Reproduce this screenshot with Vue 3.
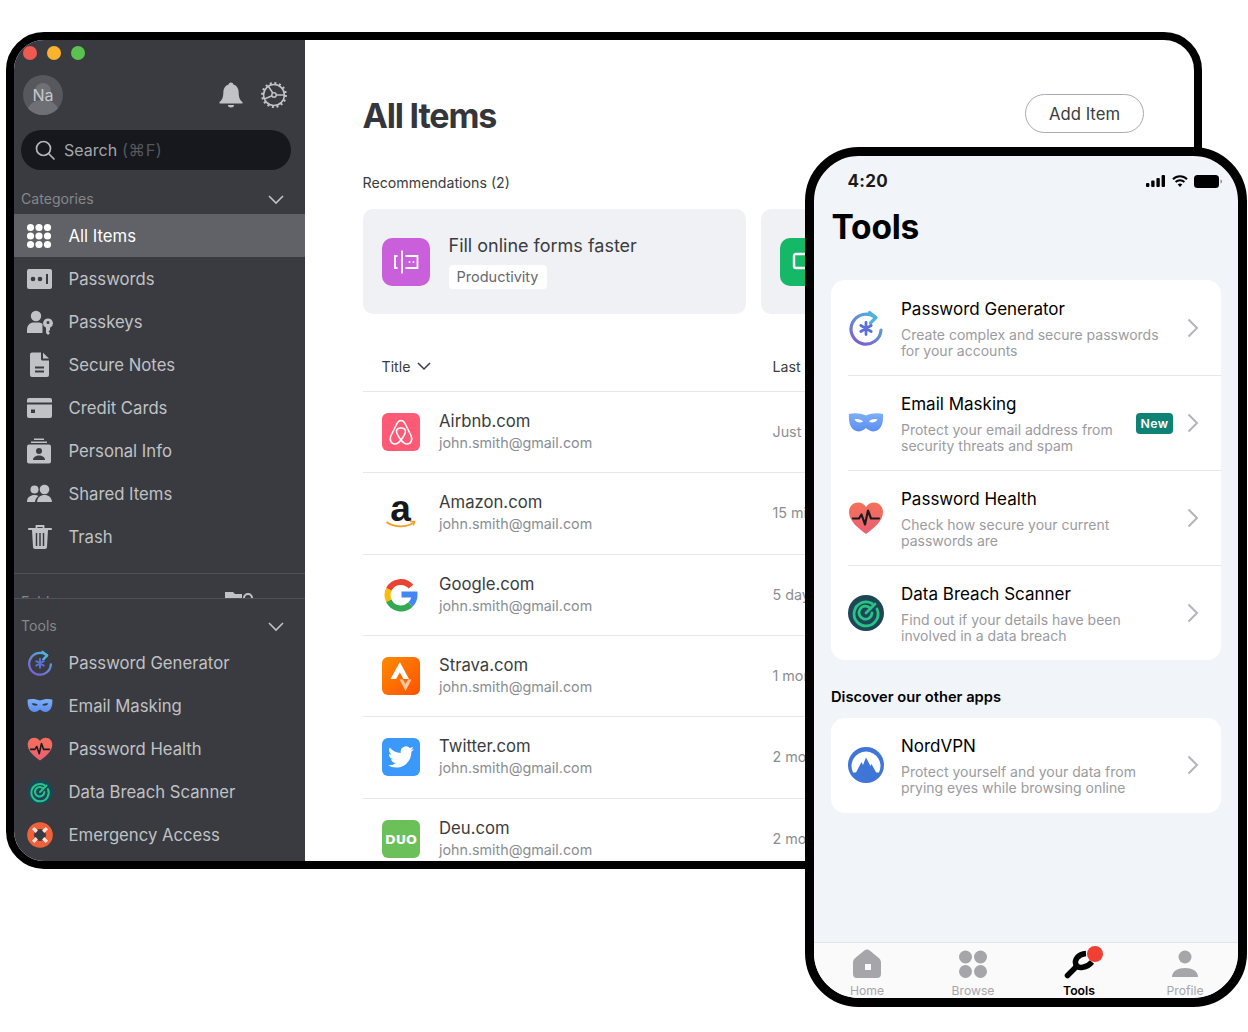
<template>
  <div class="page">
    <svg class="sprites" width="0" height="0" aria-hidden="true">
      <defs>
        <linearGradient id="grad-gen" x1="0.9" y1="0" x2="0.2" y2="1">
          <stop offset="0" stop-color="#4fb3dc" />
          <stop offset="1" stop-color="#7a5fd0" />
        </linearGradient>
        <linearGradient id="grad-mask" x1="0" y1="0" x2="0" y2="1">
          <stop offset="0" stop-color="#7cb0f8" />
          <stop offset="1" stop-color="#5b8df0" />
        </linearGradient>
        <linearGradient id="grad-heart" x1="0" y1="0" x2="0" y2="1">
          <stop offset="0" stop-color="#f5705a" />
          <stop offset="1" stop-color="#ea5f72" />
        </linearGradient>
        <linearGradient id="grad-strava" x1="0" y1="0" x2="1" y2="1">
          <stop offset="0" stop-color="#ff8a00" />
          <stop offset="1" stop-color="#ff5200" />
        </linearGradient>
        <symbol id="ic-gen" viewBox="0 0 36 36">
          <path d="M27.500 7.500A15 15 0 1 0 33 20" fill="none" stroke="url(#grad-gen)" stroke-width="3.200" stroke-linecap="round" />
          <path d="M21.500 2.500l6.500 5-5.500 5.500" fill="none" stroke="#4fb3dc" stroke-width="3.200" stroke-linecap="round" stroke-linejoin="round" />
          <path d="M18 12.500v12M12.800 15.500l10.400 6M23.200 15.500l-10.400 6" stroke="#5a6fd8" stroke-width="2.800" stroke-linecap="round" />
        </symbol>
        <symbol id="ic-mask" viewBox="0 0 36 36">
          <path fill="url(#grad-mask)" fill-rule="evenodd" d="M1 9C7 7.500 13 8.500 18 10.500c5-2 11-3 17-1.500 .5 6-.5 13-5 16-4 2.500-8 1.500-12-2-4 3.500-8 4.500-12 2C1.500 22 .5 15 1 9zM6.500 14.500c1.500 3 6 4 8.500 2-1.500-2-5.500-3.200-8.500-2zM29.500 14.500c-1.500 3-6 4-8.500 2 1.500-2 5.500-3.200 8.500-2z" />
        </symbol>
        <symbol id="ic-heart" viewBox="0 0 36 36">
          <path fill="url(#grad-heart)" d="M18 34C10 28 1 21 1 12C1 6.500 5 2.500 10 2.500c3.500 0 6.500 1.800 8 4.500C19.500 4.300 22.500 2.500 26 2.500c5 0 9 4 9 9.500C35 21 26 28 18 34z" />
          <path d="M5 18.500h6l2.500-4 3.500 10 3-14 3 8h8" fill="none" stroke="#1b1b1f" stroke-width="2.200" stroke-linecap="round" stroke-linejoin="round" />
        </symbol>
        <symbol id="ic-radar" viewBox="0 0 36 36">
          <circle cx="18" cy="18" r="18" fill="#1d4756" />
          <path d="M24 8.500A12 12 0 1 0 29 14" fill="none" stroke="#27c486" stroke-width="2.800" stroke-linecap="round" />
          <path d="M22.500 13.500A6.500 6.500 0 1 0 24 18" fill="none" stroke="#27c486" stroke-width="2.800" stroke-linecap="round" />
          <path d="M18 18L27 9" stroke="#27c486" stroke-width="2.800" stroke-linecap="round" />
        </symbol>
        <symbol id="ic-life" viewBox="0 0 36 36">
          <circle cx="18" cy="18" r="13" fill="none" stroke="#f0603a" stroke-width="9.500" />
          <path d="M8.500 8.500l5 5M27.500 8.500l-5 5M8.500 27.500l5-5M27.500 27.500l-5-5" stroke="#fbe3da" stroke-width="4.500" />
        </symbol>
        <symbol id="ic-nord" viewBox="0 0 36 36">
          <circle cx="18" cy="18" r="18" fill="#3e75d6" />
          <path d="M5 25.500A14.500 14.500 0 1 1 31 25.500z" fill="#fff" />
          <path d="M7 27.500L13.500 15l1.500 3 3-7.500 4.500 8.500 1-2 6 11-6 5H12z" fill="#3e75d6" />
        </symbol>
      </defs>
    </svg>

    <div class="tablet">
      <aside class="sidebar">
        <div class="lights">
          <span class="light red"></span>
          <span class="light yellow"></span>
          <span class="light green"></span>
        </div>
        <div class="profile">
          <div class="avatar">
            <svg viewBox="0 0 40 40" width="40" height="40">
              <circle cx="20" cy="16" r="8" fill="#6e7075" />
              <path d="M4 36c2-8 9-11 16-11s14 3 16 11l-8 4H12z" fill="#6e7075" />
            </svg>
            <span>Na</span>
          </div>
          <svg class="bell" viewBox="0 0 26 26" width="26" height="26">
            <path fill="#c0c2c6" d="M13 0.500c1.300 0 2.200 .8 2.400 2 3.500 1 5.300 4 5.300 8 0 5 1.300 7.500 3.800 9.500v1.500H1.500V20c2.500-2 3.800-4.500 3.800-9.500 0-4 1.800-7 5.300-8 .2-1.200 1.100-2 2.400-2z" />
            <path fill="#c0c2c6" d="M10 23h6a3 2.500 0 0 1-6 0z" />
          </svg>
          <svg class="gear" viewBox="0 0 26 26" width="26" height="26" fill="none" stroke="#c0c2c6">
            <circle cx="13" cy="13" r="11.700" stroke-width="2.400" stroke-dasharray="2 2.600" />
            <circle cx="13" cy="13" r="10.400" stroke-width="1.500" />
            <circle cx="13" cy="13" r="2.200" stroke-width="1.500" />
            <path d="M11.800 11L7.500 4.500M11 13.800l-7 3M15.200 13H23" stroke-width="1.500" />
          </svg>
        </div>
        <div class="search">
          <svg viewBox="0 0 20 20" width="20" height="20" fill="none" stroke="#b4b6ba" stroke-width="1.700">
            <circle cx="8.500" cy="8.500" r="7" />
            <path d="M13.500 13.500L19 19" stroke-linecap="round" />
          </svg>
          <span class="search-text">Search</span>
          <span class="search-hint">(⌘F)</span>
        </div>

        <div class="section-label">
          <span>Categories</span>
          <svg class="chev" viewBox="0 0 16 10" width="16" height="10"><path d="M1 1l7 7 7-7" /></svg>
        </div>
        <div v-for="c in categories" :key="c.label" class="side-row" :class="{ active: c.active }">
          <svg class="side-icon" viewBox="0 0 26 26" width="26" height="26">
            <g v-if="c.icon === 'grid'" fill="#fff">
              <template v-for="y in [4.500, 13, 21.500]" :key="y">
                <circle v-for="x in [3.500, 12, 20.500]" :key="x" :cx="x" :cy="y" r="3.600" />
              </template>
            </g>
            <g v-else-if="c.icon === 'passwords'">
              <rect y="3" width="25" height="20" rx="2" fill="#c0c2c6" />
              <circle cx="6" cy="13" r="2.300" fill="#393b40" />
              <circle cx="13" cy="13" r="2.300" fill="#393b40" />
              <rect x="19" y="8" width="2" height="10" fill="#393b40" />
            </g>
            <g v-else-if="c.icon === 'passkeys'" fill="#c0c2c6">
              <circle cx="9" cy="7" r="5.200" />
              <path d="M0 24v-3c0-5 3-7.500 7-7.500h4c2 0 3.500 .5 4.500 1.500v9z" />
              <path fill-rule="evenodd" d="M21 9.500a4.800 4.800 0 0 1 2 9.200V21l-1.500 1.500L23 24l-2 2-2-2v-5.300a4.800 4.800 0 0 1 2-9.200zM21 12a1.500 1.500 0 1 0 0 3 1.500 1.500 0 0 0 0-3z" />
            </g>
            <g v-else-if="c.icon === 'notes'" fill="#c0c2c6">
              <path d="M5 0.500h9v6.500a1.500 1.500 0 0 0 1.500 1.500H22V23a2 2 0 0 1-2 2H5a2 2 0 0 1-2-2V2.500a2 2 0 0 1 2-2z" />
              <path d="M16 0.800L22 6.500h-6z" />
              <path d="M8 15.500h9M8 19.500h9" stroke="#393b40" stroke-width="1.800" />
            </g>
            <g v-else-if="c.icon === 'cards'" fill="#c0c2c6">
              <path d="M2 3h21a2 2 0 0 1 2 2v2.500H0V5a2 2 0 0 1 2-2z" />
              <path d="M0 9.500h25V21a2 2 0 0 1-2 2H2a2 2 0 0 1-2-2z" />
              <rect x="4" y="14.500" width="4" height="3.500" fill="#393b40" />
            </g>
            <g v-else-if="c.icon === 'personal'" fill="#c0c2c6">
              <rect x="7" y="0.500" width="10" height="1.500" />
              <rect x="4" y="3.500" width="16" height="1.500" />
              <rect y="6.500" width="24" height="19" rx="2" />
              <circle cx="12" cy="13" r="3" fill="#393b40" />
              <path d="M6 22c0-3 3-4.500 6-4.500s6 1.500 6 4.500z" fill="#393b40" />
            </g>
            <g v-else-if="c.icon === 'shared'" fill="#c0c2c6">
              <circle cx="7.500" cy="8.500" r="4" />
              <circle cx="17.500" cy="8.500" r="4.800" />
              <path d="M0 21c0-5 3.500-7 7.500-7 1.500 0 2.800 .3 4 1-2.200 1.500-3.300 3.500-3.500 6z" />
              <path d="M10 21c.3-4.500 3.500-7 7.500-7s7.200 2.500 7.500 7z" />
            </g>
            <g v-else fill="none" stroke="#c0c2c6">
              <path d="M2 5h22" stroke-width="2.200" stroke-linecap="round" />
              <path d="M9.500 4.500V2h7v2.500" stroke-width="1.800" />
              <path d="M5 6l1 17a2 2 0 0 0 2 2h10a2 2 0 0 0 2-2l1-17z" fill="#c0c2c6" stroke="none" />
              <path d="M9.500 9v13M13 9v13M16.500 9v13" stroke="#393b40" stroke-width="1.500" />
            </g>
          </svg>
          <span>{{ c.label }}</span>
        </div>

        <div class="folders">
          <span class="folders-label">Folders</span>
          <svg viewBox="0 0 28 14" width="28" height="14">
            <path d="M0 0h8l2 2h7v12H0z" fill="#c0c2c6" />
            <circle cx="23" cy="6" r="4" fill="none" stroke="#c0c2c6" stroke-width="2" />
          </svg>
        </div>

        <div class="section-label tools-label">
          <span>Tools</span>
          <svg class="chev" viewBox="0 0 16 10" width="16" height="10"><path d="M1 1l7 7 7-7" /></svg>
        </div>
        <div v-for="t in sideTools" :key="t.label" class="side-row">
          <svg class="side-icon" width="26" height="26"><use :href="'#ic-' + t.icon" /></svg>
          <span>{{ t.label }}</span>
        </div>
      </aside>

      <main class="main">
        <div class="main-head">
          <h1>All Items</h1>
          <button class="add-btn">Add Item</button>
        </div>
        <p class="rec-title">Recommendations (2)</p>
        <div class="recs">
          <div class="rec-card">
            <div class="rec-icon purple">
              <svg viewBox="0 0 28 28" width="28" height="28" fill="none" stroke="#fff" stroke-width="1.800">
                <path d="M5.500 8H3v12h2.500M10 2.500v23" />
                <path d="M13.500 8h12v12h-12" />
                <circle cx="17.500" cy="14" r="1" fill="#fff" stroke="none" />
                <circle cx="21.500" cy="14" r="1" fill="#fff" stroke="none" />
              </svg>
            </div>
            <div class="rec-body">
              <div class="rec-name">Fill online forms faster</div>
              <span class="rec-tag">Productivity</span>
            </div>
          </div>
          <div class="rec-card">
            <div class="rec-icon green">
              <svg viewBox="0 0 28 28" width="28" height="28" fill="none" stroke="#fff" stroke-width="2.400">
                <path d="M24 6H6a2 2 0 0 0-2 2v10a2 2 0 0 0 2 2h18" />
              </svg>
            </div>
            <div class="rec-body">
              <div class="rec-name">Set up two-factor login</div>
              <span class="rec-tag">Security</span>
            </div>
          </div>
        </div>

        <div class="table-head">
          <div class="th-title">
            Title
            <svg viewBox="0 0 14 9" width="14" height="9" fill="none" stroke="#3a3c40" stroke-width="1.500"><path d="M1 1l6 6 6-6" /></svg>
          </div>
          <div>Last used</div>
        </div>
        <div v-for="s in sites" :key="s.name" class="site-row">
          <div class="site-cell">
            <svg class="site-logo" viewBox="0 0 38 38" width="38" height="38">
              <g v-if="s.logo === 'airbnb'">
                <rect width="38" height="38" rx="6" fill="#ff5a75" />
                <path fill="none" stroke="#fff" stroke-width="1.600" d="M19 7.500c-2 0-3 1-4 3l-6 12c-2 4 0 8.500 4 8.500 2 0 4-1.500 6-4 2 2.500 4 4 6 4 4 0 6-4.500 4-8.500l-6-12c-1-2-2-3-4-3zM19 27c-3-4-4.500-6.500-4.500-8.500 0-2.500 2-3.500 4.500-3.500s4.500 1 4.500 3.500c0 2-1.500 4.500-4.500 8.500z" />
              </g>
              <g v-else-if="s.logo === 'amazon'">
                <text x="18.500" y="26.500" text-anchor="middle" class="amazon-a">a</text>
                <path d="M5 28.500c8 5 19 5 26 .5" fill="none" stroke="#f79c1d" stroke-width="1.800" stroke-linecap="round" />
                <path d="M28 27.500h4.500l-1 4" fill="none" stroke="#f79c1d" stroke-width="1.400" />
              </g>
              <g v-else-if="s.logo === 'google'" fill="none" stroke-width="6">
                <path d="M28.960 10.640A13.500 13.500 0 0 0 6.800 13.300" stroke="#ea4335" />
                <path d="M6.800 13.300A13.500 13.500 0 0 0 6.800 24.700" stroke="#fbbc05" />
                <path d="M6.800 24.700A13.500 13.500 0 0 0 28.500 28.500" stroke="#34a853" />
                <path d="M28.500 28.500A13.500 13.500 0 0 0 32.500 18.500H19.500" stroke="#4285f4" />
              </g>
              <g v-else-if="s.logo === 'strava'">
                <rect width="38" height="38" rx="6" fill="url(#grad-strava)" />
                <path d="M17.800 5L27 22h-5.500l-3.700-6.500-3.700 6.500H8.500z" fill="#fff" />
                <path d="M17.500 22.500h3.500l2.500 4.500 2.500-4.500h3.500L23.500 34z" fill="#ffc4a0" />
              </g>
              <g v-else-if="s.logo === 'twitter'">
                <rect width="38" height="38" rx="6" fill="#3b99fc" />
                <svg x="6" y="6" width="26" height="26" viewBox="0 0 24 24">
                  <path fill="#fff" d="M23.953 4.570a10 10 0 01-2.825.775 4.958 4.958 0 002.163-2.723c-.951.555-2.005.959-3.127 1.184a4.920 4.920 0 00-8.384 4.482C7.690 8.095 4.067 6.130 1.640 3.162a4.822 4.822 0 00-.666 2.475c0 1.710.870 3.213 2.188 4.096a4.904 4.904 0 01-2.228-.616v.060a4.923 4.923 0 003.946 4.827 4.996 4.996 0 01-2.212.085 4.936 4.936 0 004.604 3.417 9.867 9.867 0 01-6.102 2.105c-.390 0-.779-.023-1.170-.067a13.995 13.995 0 007.557 2.209c9.053 0 13.998-7.496 13.998-13.985 0-.210 0-.420-.015-.630A9.935 9.935 0 0024 4.590z" />
                </svg>
              </g>
              <g v-else>
                <rect width="38" height="38" rx="6" fill="#6cc05a" />
                <text x="19" y="23.700" text-anchor="middle" class="duo-text" textLength="32" lengthAdjust="spacingAndGlyphs">DUO</text>
              </g>
            </svg>
            <div>
              <div class="site-name">{{ s.name }}</div>
              <div class="site-mail">john.smith@gmail.com</div>
            </div>
          </div>
          <div class="site-when">{{ s.when }}</div>
        </div>
      </main>
    </div>

    <div class="phone">
      <div class="status">
        <span class="clock">4:20</span>
        <div class="status-icons">
          <svg viewBox="0 0 20 12" width="20" height="12" fill="#000">
            <rect y="8" width="3.400" height="4" rx="1" />
            <rect x="5.200" y="5.500" width="3.400" height="6.500" rx="1" />
            <rect x="10.400" y="3" width="3.400" height="9" rx="1" />
            <rect x="15.600" y="0" width="3.400" height="12" rx="1" />
          </svg>
          <svg viewBox="0 0 16 12" width="16" height="12" fill="none" stroke="#000" stroke-width="2">
            <path d="M1 4.200a10 10 0 0 1 14 0M3.600 7a6.300 6.300 0 0 1 8.800 0" />
            <path d="M8 12l-2.300-2.500a3.300 3.300 0 0 1 4.600 0z" fill="#000" stroke="none" />
          </svg>
          <svg viewBox="0 0 28 13" width="28" height="13">
            <rect x="0" y="0" width="25" height="13" rx="3.500" fill="#000" />
            <path d="M26.500 4.500c1 .3 1.500 1 1.500 2s-.5 1.700-1.500 2z" fill="#8a8a8e" />
          </svg>
        </div>
      </div>
      <h2 class="phone-title">Tools</h2>
      <div class="phone-card tools-card">
        <div v-for="t in phoneTools" :key="t.title" class="tool-row">
          <svg class="tool-icon" width="36" height="36"><use :href="'#ic-' + t.icon" /></svg>
          <div class="tool-text">
            <div class="tool-title">{{ t.title }}</div>
            <div class="tool-desc">{{ t.desc }}</div>
          </div>
          <span v-if="t.isNew" class="badge">New</span>
          <svg class="tool-chev" viewBox="0 0 12 20" width="12" height="20" fill="none" stroke="#b5b5b9" stroke-width="2"><path d="M1.500 1.500L10 10l-8.500 8.500" /></svg>
        </div>
      </div>
      <div class="discover">Discover our other apps</div>
      <div class="phone-card">
        <div class="tool-row nord-row">
          <svg class="tool-icon" width="36" height="36"><use href="#ic-nord" /></svg>
          <div class="tool-text">
            <div class="tool-title">NordVPN</div>
            <div class="tool-desc">{{ nordDesc }}</div>
          </div>
          <svg class="tool-chev" viewBox="0 0 12 20" width="12" height="20" fill="none" stroke="#b5b5b9" stroke-width="2"><path d="M1.500 1.500L10 10l-8.500 8.500" /></svg>
        </div>
      </div>

      <nav class="tabbar">
        <div class="tab">
          <svg viewBox="0 0 30 30" width="30" height="30">
            <path fill="#a6a6aa" fill-rule="evenodd" d="M15 0.500c1 0 2 .5 3 1.300l8.500 7c1.400 1.200 2.500 2.500 2.500 4.700V25a4 4 0 0 1-4 4H5a4 4 0 0 1-4-4V13.500c0-2.200 1.100-3.500 2.500-4.700l8.500-7c1-.8 2-1.300 3-1.300zM13 15v6h6v-6z" />
          </svg>
          <span>Home</span>
        </div>
        <div class="tab">
          <svg viewBox="0 0 30 30" width="30" height="30" fill="#a6a6aa">
            <circle cx="7.500" cy="8" r="6.500" />
            <circle cx="22.500" cy="8" r="6.500" />
            <circle cx="7.500" cy="22.500" r="6.500" />
            <circle cx="22.500" cy="22.500" r="6.500" />
          </svg>
          <span>Browse</span>
        </div>
        <div class="tab current">
          <svg class="wrench" viewBox="0 0 36 30" width="36" height="30">
            <path d="M6.500 26.500L16 17" stroke="#000" stroke-width="5.500" stroke-linecap="round" />
            <path d="M25 4.500C17 5 13 11 15 16c2 4 11 3 16-3" fill="none" stroke="#000" stroke-width="5.500" />
            <circle cx="34" cy="5" r="8" fill="#f23f33" />
          </svg>
          <span>Tools</span>
        </div>
        <div class="tab">
          <svg viewBox="0 0 30 30" width="30" height="30" fill="#a6a6aa">
            <circle cx="15" cy="8" r="6.500" />
            <path d="M2 28c0-6 6-9 13-9s13 3 13 9z" />
          </svg>
          <span>Profile</span>
        </div>
      </nav>
    </div>
  </div>
</template>

<script setup>
const categories = [
  { label: 'All Items', icon: 'grid', active: true },
  { label: 'Passwords', icon: 'passwords' },
  { label: 'Passkeys', icon: 'passkeys' },
  { label: 'Secure Notes', icon: 'notes' },
  { label: 'Credit Cards', icon: 'cards' },
  { label: 'Personal Info', icon: 'personal' },
  { label: 'Shared Items', icon: 'shared' },
  { label: 'Trash', icon: 'trash' },
];

const sideTools = [
  { label: 'Password Generator', icon: 'gen' },
  { label: 'Email Masking', icon: 'mask' },
  { label: 'Password Health', icon: 'heart' },
  { label: 'Data Breach Scanner', icon: 'radar' },
  { label: 'Emergency Access', icon: 'life' },
];

const sites = [
  { name: 'Airbnb.com', logo: 'airbnb', when: 'Just now' },
  { name: 'Amazon.com', logo: 'amazon', when: '15 min ago' },
  { name: 'Google.com', logo: 'google', when: '5 days ago' },
  { name: 'Strava.com', logo: 'strava', when: '1 month ago' },
  { name: 'Twitter.com', logo: 'twitter', when: '2 months ago' },
  { name: 'Deu.com', logo: 'duo', when: '2 months ago' },
];

const phoneTools = [
  { title: 'Password Generator', icon: 'gen', desc: 'Create complex and secure passwords\nfor your accounts' },
  { title: 'Email Masking', icon: 'mask', desc: 'Protect your email address from\nsecurity threats and spam', isNew: true },
  { title: 'Password Health', icon: 'heart', desc: 'Check how secure your current\npasswords are' },
  { title: 'Data Breach Scanner', icon: 'radar', desc: 'Find out if your details have been\ninvolved in a data breach' },
];

const nordDesc = 'Protect yourself and your data from\nprying eyes while browsing online';
</script>

<style>
html,
body {
  background: #fff;
}
</style>

<style scoped>
.page {
  position: relative;
  width: 1248px;
  height: 1032px;
  overflow: hidden;
  font-family: Inter, "Liberation Sans", sans-serif;
}
.sprites {
  position: absolute;
}

/* tablet */
.tablet {
  position: absolute;
  left: 6px;
  top: 32px;
  width: 1196px;
  height: 837px;
  box-sizing: border-box;
  border: 8px solid #000;
  border-radius: 38px;
  overflow: hidden;
  display: flex;
  background: #fff;
}
.sidebar {
  width: 291px;
  flex-shrink: 0;
  background: #393b40;
  color: #c0c2c6;
  overflow: hidden;
}
.lights {
  display: flex;
  gap: 10px;
  padding: 6px 0 0 9px;
}
.light {
  width: 14px;
  height: 14px;
  border-radius: 50%;
}
.red { background: #ee5a52; }
.yellow { background: #fbb32e; }
.green { background: #5ac24f; }
.profile {
  display: flex;
  align-items: center;
  margin: 15px 18px 0 9px;
  height: 40px;
}
.avatar {
  position: relative;
  width: 40px;
  height: 40px;
  border-radius: 50%;
  background: #56585d;
  overflow: hidden;
  margin-right: auto;
}
.avatar span {
  position: absolute;
  inset: 0;
  display: flex;
  align-items: center;
  justify-content: center;
  font-size: 16px;
  color: #c6c8cc;
}
.bell {
  margin-right: 17px;
}
.search {
  display: flex;
  align-items: center;
  width: 270px;
  height: 40px;
  margin: 15px 0 0 7px;
  box-sizing: border-box;
  padding-left: 14px;
  background: #16181d;
  border-radius: 20px;
  font-size: 16px;
}
.search-text {
  margin-left: 9px;
  color: #a4a6aa;
}
.search-hint {
  margin-left: 5px;
  font-size: 16.500px;
  letter-spacing: .5px;
  color: #54565b;
  font-family: Inter, "DejaVu Sans", sans-serif;
}
.section-label {
  display: flex;
  justify-content: space-between;
  align-items: center;
  height: 20px;
  margin: 18px 21px 6px 7px;
  font-size: 14.100px;
  color: #85878b;
}
.chev {
  margin-top: 3px;
  fill: none;
  stroke: #c0c2c6;
  stroke-width: 1.600;
}
.side-row {
  display: flex;
  align-items: center;
  height: 43px;
  padding-left: 13px;
  font-size: 16.700px;
  color: #c0c2c6;
}
.side-row.active {
  background: #606267;
  color: #fff;
}
.side-icon {
  margin-right: 15.500px;
  flex-shrink: 0;
}
.folders {
  display: flex;
  justify-content: space-between;
  height: 6px;
  margin-top: 15px;
  padding: 18px 52px 0 7px;
  border-top: 1px solid #4f5156;
  border-bottom: 1px solid #4f5156;
  overflow: hidden;
  font-size: 14.100px;
  color: #85878b;
}
.folders-label {
  line-height: 20px;
}
.tools-label {
  margin-top: 16px;
}

/* main pane */
.main {
  flex: 1;
  min-width: 0;
  padding-left: 57.500px;
  color: #3a3c40;
  overflow: hidden;
}
.main-head {
  display: flex;
  justify-content: space-between;
  align-items: center;
  width: 781.500px;
  height: 39px;
  margin-top: 54px;
}
h1 {
  margin: 4px 0 0;
  font-size: 34px;
  font-weight: 700;
  letter-spacing: -1.200px;
  color: #34363b;
}
.add-btn {
  width: 119px;
  height: 39px;
  background: #fff;
  border: 1px solid #a9abb0;
  border-radius: 20px;
  font-family: inherit;
  font-size: 16.700px;
  color: #3a3c40;
}
.rec-title {
  margin: 39px 0 15px;
  font-size: 14.200px;
  line-height: 22px;
}
.recs {
  display: flex;
  gap: 15px;
}
.rec-card {
  flex: 0 0 383px;
  height: 105px;
  box-sizing: border-box;
  display: flex;
  align-items: center;
  padding-left: 19px;
  background: #f0f1f4;
  border-radius: 10px;
}
.rec-icon {
  width: 48px;
  height: 48px;
  border-radius: 10px;
  display: flex;
  align-items: center;
  justify-content: center;
  margin-right: 19px;
}
.purple { background: #c95fdb; }
.green.rec-icon { background: #14b866; }
.rec-name {
  font-size: 18px;
  line-height: 24px;
}
.rec-tag {
  display: inline-block;
  margin-top: 7px;
  padding: 0 8px;
  background: #fff;
  border-radius: 4px;
  font-size: 14.500px;
  line-height: 24px;
  color: #66686c;
}
.table-head {
  display: grid;
  grid-template-columns: 391px 1fr;
  align-items: center;
  width: 781px;
  height: 48px;
  margin-top: 30px;
  padding: 0 0 2px 19px;
  box-sizing: border-box;
  border-bottom: 1px solid #e6e7ea;
  font-size: 14.200px;
}
.th-title {
  display: flex;
  align-items: center;
  gap: 7px;
}
.site-row {
  display: grid;
  grid-template-columns: 391px 1fr;
  align-items: center;
  width: 781px;
  height: 81.330px;
  padding-left: 19px;
  box-sizing: border-box;
  border-bottom: 1px solid #e6e7ea;
}
.site-cell {
  display: flex;
  align-items: center;
  gap: 19.500px;
}
.site-logo {
  flex-shrink: 0;
  overflow: visible;
}
.site-name {
  font-size: 16.700px;
  line-height: 22px;
}
.site-mail {
  font-size: 14.300px;
  line-height: 22px;
  color: #8b8d91;
}
.site-when {
  margin-top: -1px;
  font-size: 14.300px;
  color: #8b8d91;
}
.amazon-a {
  font-family: "Liberation Sans", sans-serif;
  font-size: 37px;
  font-weight: 700;
  fill: #17181c;
}
.duo-text {
  font-family: "DejaVu Sans", sans-serif;
  font-size: 13px;
  font-weight: 700;
  fill: #fff;
}

/* phone */
.phone {
  position: absolute;
  left: 805px;
  top: 147px;
  width: 442px;
  height: 860px;
  box-sizing: border-box;
  border: 9px solid #000;
  border-radius: 54px;
  overflow: hidden;
  display: flex;
  flex-direction: column;
  background: #f1f4f8;
  color: #000;
}
.status {
  flex-shrink: 0;
  display: flex;
  justify-content: space-between;
  align-items: center;
  height: 50px;
  padding: 0 16px 0 33.500px;
}
.clock {
  font-size: 17px;
  font-weight: 700;
  letter-spacing: .3px;
  color: #1a1a1a;
}
.status-icons {
  display: flex;
  align-items: center;
  gap: 6px;
}
.phone-title {
  margin: 0 0 32px 17.500px;
  font-size: 33.500px;
  line-height: 42px;
  letter-spacing: -.2px;
  font-weight: 700;
}
.phone-card {
  flex-shrink: 0;
  width: 390px;
  margin-left: 17px;
  background: #fff;
  border-radius: 14px;
  overflow: hidden;
}
.tool-row {
  display: flex;
  align-items: center;
  height: 95px;
  box-sizing: border-box;
  margin-left: 17px;
  padding-right: 22px;
}
.tools-card .tool-row:not(:last-child) {
  border-bottom: 1px solid #e6e7ea;
}
.tools-card .tool-row:first-child {
  height: 96px;
}
.tools-card .tool-row:last-child {
  height: 94px;
}
.nord-row {
  padding-bottom: 2px;
}
.tool-icon {
  flex-shrink: 0;
  margin-right: 17px;
}
.tool-text {
  flex: 1;
  min-width: 0;
}
.tool-title {
  font-size: 17px;
  line-height: 24px;
}
.tool-desc {
  margin-top: 6px;
  font-size: 14px;
  line-height: 16px;
  color: #9b9b9f;
  white-space: pre-line;
}
.badge {
  margin-right: 14px;
  padding: 0 4.500px;
  background: #0f8276;
  border-radius: 4px;
  font-size: 12.300px;
  font-weight: 600;
  line-height: 21px;
  letter-spacing: .4px;
  color: #fff;
}
.tool-chev {
  flex-shrink: 0;
}
.discover {
  margin: 27px 0 11px 17px;
  font-size: 14.700px;
  font-weight: 600;
  line-height: 20px;
}
.tabbar {
  margin-top: auto;
  flex-shrink: 0;
  display: grid;
  grid-template-columns: repeat(4, 1fr);
  height: 56px;
  box-sizing: border-box;
  background: #fafafa;
  border-top: 1px solid #e3e4e7;
}
.tab {
  display: flex;
  flex-direction: column;
  align-items: center;
  padding-top: 6px;
  font-size: 12.200px;
  line-height: 14px;
  color: #a6a6aa;
}
.tab svg {
  margin-bottom: 5px;
  overflow: visible;
}
.tab.current {
  color: #000;
  font-weight: 600;
}
</style>
